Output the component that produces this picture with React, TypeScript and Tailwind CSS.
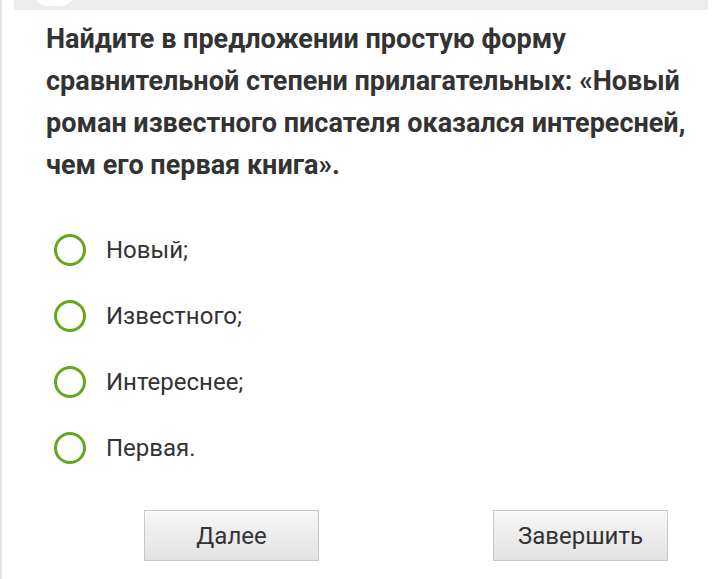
const options = ["Новый;", "Известного;", "Интереснее;", "Первая."];

function Radio() {
  return (
    <span className="block h-[32px] w-[32px] shrink-0 rounded-full border-[3px] border-[#62a81f]" />
  );
}

export default function App() {
  return (
    <div
      className="relative h-[579px] w-[720px] overflow-hidden border-l-2 border-[#e4e4e4] bg-white text-[#333]"
      style={{ fontFamily: "Roboto, 'Noto Sans', sans-serif" }}
    >
      {/* top bar */}
      <div className="relative mx-[12px] h-[10px] overflow-hidden bg-[#ececec]">
        <div className="absolute left-[18px] top-[-26px] h-[32px] w-[44px] rounded-full bg-white" />
      </div>

      <h1 className="mt-[8px] pl-[44px] pr-[16px] text-[27px] font-bold leading-[42px] text-[#333]">
        Найдите в предложении простую форму сравнительной степени прилагательных: «Новый роман
        известного писателя оказался интересней, чем его первая книга».
      </h1>

      <div className="mt-[48px] flex flex-col gap-[34px] pl-[52px]">
        {options.map((o) => (
          <label key={o} className="flex h-[32px] items-center gap-[20px]">
            <Radio />
            <span className="text-[24px] text-[#333]">{o}</span>
          </label>
        ))}
      </div>

      <div className="mt-[46px] flex justify-between pl-[142px] pr-[52px]">
        <button className="h-[51px] w-[175px] border border-[#c9c9c9] bg-gradient-to-b from-[#f7f7f7] to-[#e2e2e2] text-[24px] text-[#333]">
          Далее
        </button>
        <button className="h-[51px] w-[175px] border border-[#c9c9c9] bg-gradient-to-b from-[#f7f7f7] to-[#e2e2e2] text-[24px] text-[#333]">
          Завершить
        </button>
      </div>
    </div>
  );
}
